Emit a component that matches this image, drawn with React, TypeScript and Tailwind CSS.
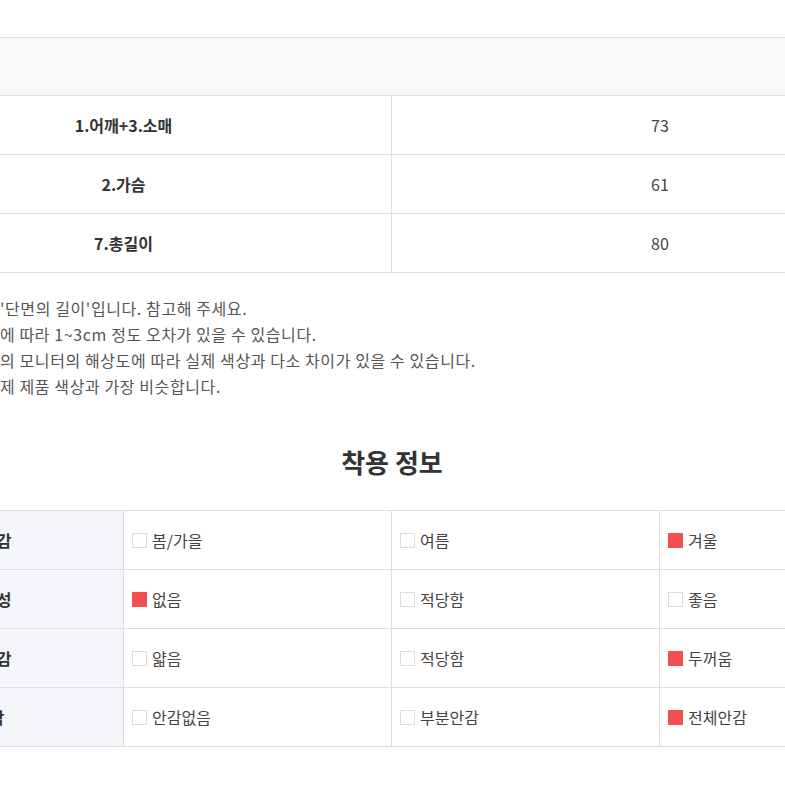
import React from "react";

const font = { fontFamily: '"Noto Sans CJK KR", "Noto Sans", sans-serif' };

const sizeRows = [
  { label: "1.어깨+3.소매", value: "73" },
  { label: "2.가슴", value: "61" },
  { label: "7.총길이", value: "80" },
];

const notes = [
  { hidden: "* 사이즈는\u00a0", shown: "'단면의 길이'입니다. 참고해 주세요." },
  { hidden: "* 측정 방법", shown: "에 따라 1~3cm 정도 오차가 있을 수 있습니다." },
  { hidden: "* 사용자", shown: "의 모니터의 해상도에 따라 실제 색상과 다소 차이가 있을 수 있습니다." },
  { hidden: "* 디테일 컷이 실", shown: "제 제품 색상과 가장 비슷합니다." },
];

const wearRows: { label: string; options: [string, boolean][] }[] = [
  { label: "계절감", options: [["봄/가을", false], ["여름", false], ["겨울", true]] },
  { label: "신축성", options: [["없음", true], ["적당함", false], ["좋음", false]] },
  { label: "두께감", options: [["얇음", false], ["적당함", false], ["두꺼움", true]] },
  { label: "안감", options: [["안감없음", false], ["부분안감", false], ["전체안감", true]] },
];

function Box({ on }: { on: boolean }) {
  return on ? (
    <span className="inline-block w-[15px] h-[15px] bg-[#f24f4f] shrink-0" />
  ) : (
    <span className="inline-block w-[15px] h-[15px] border border-[#dcdcdc] bg-white shrink-0" />
  );
}

export default function App() {
  return (
    <div className="w-[785px] h-[785px] overflow-hidden bg-white" style={font}>
      <div className="w-[1072px] ml-[-144px] pt-[37px]">
        {/* size table */}
        <div className="border-t border-[#dedede]">
          <div className="h-[58px] bg-[#f7f8fa] border-b border-[#dedede]" />
          {sizeRows.map((r) => (
            <div key={r.label} className="grid grid-cols-2 h-[59px] border-b border-[#dedede]">
              <div className="flex items-center justify-center border-r border-[#dedede] text-[16px] font-bold text-[#333]">
                {r.label}
              </div>
              <div className="flex items-center justify-center text-[16px] text-[#444]">{r.value}</div>
            </div>
          ))}
        </div>

        {/* notes */}
        <div className="pl-[144px] pt-[22px] text-[16px] leading-[26px] tracking-[0.6px] text-[#555]">
          {notes.map((n) => (
            <p key={n.shown} className="whitespace-nowrap">
              <span className="inline-block w-[220px] ml-[-220px] text-right">{n.hidden}</span>
              {n.shown}
            </p>
          ))}
        </div>

        {/* wear info */}
        <h2 className="text-center text-[26px] leading-[34px] font-bold text-[#333] mt-[46px]">착용 정보</h2>
        <div className="mt-[31px] border-t border-[#dedede]">
          {wearRows.map((r) => (
            <div key={r.label} className="grid grid-cols-4 h-[59px] border-b border-[#dedede]">
              <div className="flex items-center justify-center bg-[#f5f6f9] border-r border-[#dedede] text-[16px] font-bold text-[#333]">
                {r.label}
              </div>
              {r.options.map(([t, on], i) => (
                <div
                  key={t + i}
                  className={`flex items-center gap-[5px] pl-[8px] text-[16px] text-[#444] ${i < 2 ? "border-r border-[#dedede]" : ""}`}
                >
                  <Box on={on} />
                  <span>{t}</span>
                </div>
              ))}
            </div>
          ))}
        </div>
      </div>
    </div>
  );
}
